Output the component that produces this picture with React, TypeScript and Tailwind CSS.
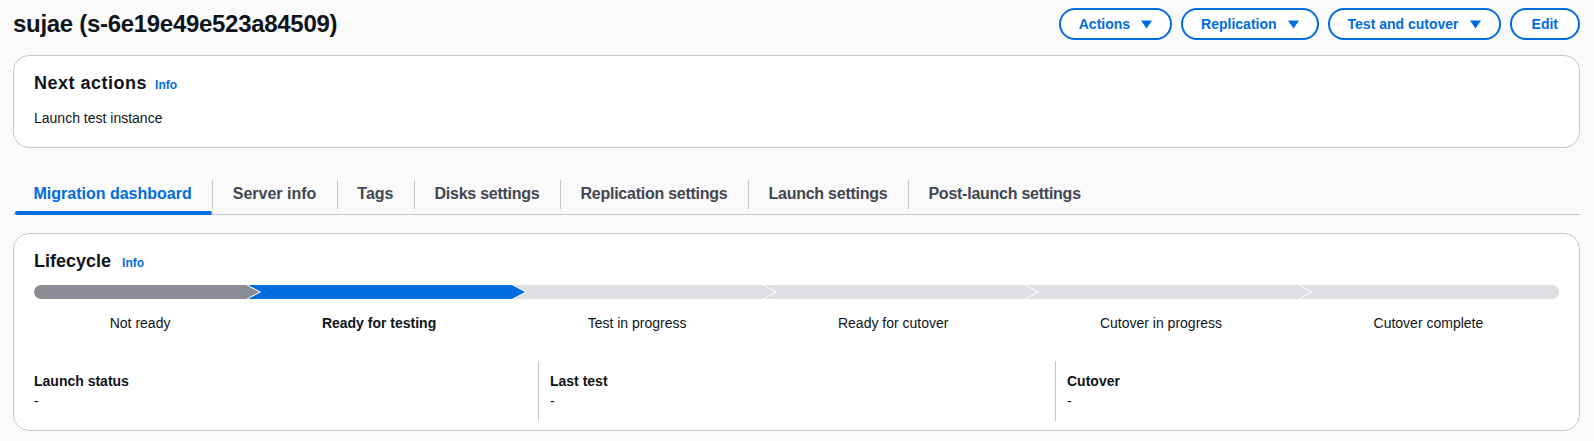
import type { ReactNode } from "react"

type Step = {
  label: string
  state: "done" | "current" | "todo"
}

const steps: Step[] = [
  { label: "Not ready", state: "done" },
  { label: "Ready for testing", state: "current" },
  { label: "Test in progress", state: "todo" },
  { label: "Ready for cutover", state: "todo" },
  { label: "Cutover in progress", state: "todo" },
  { label: "Cutover complete", state: "todo" },
]

const tabs = [
  "Migration dashboard",
  "Server info",
  "Tags",
  "Disks settings",
  "Replication settings",
  "Launch settings",
  "Post-launch settings",
]

const Caret = () => (
  <svg width="11" height="9" viewBox="0 0 11 9" className="ml-[11px]">
    <polygon points="0,0.5 11,0.5 5.5,8.5" fill="currentColor" />
  </svg>
)

const HeaderButton = ({
  children,
  caret,
  className,
}: {
  children: ReactNode
  caret?: boolean
  className?: string
}) => (
  <button
    className={`flex h-8 items-center rounded-full border-2 border-[#006ce0] bg-white text-[14px] font-bold leading-5 text-[#006ce0] ${
      className ?? "px-[18px]"
    }`}
  >
    {children}
    {caret && <Caret />}
  </button>
)

const InfoLink = ({ className }: { className?: string }) => (
  <span className={`text-[12px] font-bold text-[#006ce0] ${className ?? ""}`}>Info</span>
)

const stepColor = {
  done: "bg-[#8c8c94]",
  current: "bg-[#006ce0]",
  todo: "bg-[#dedee3]",
}

const Lifecycle = () => (
  <div className="flex">
    {steps.map((step, i) => {
      const first = i === 0
      const last = i === steps.length - 1
      // each piece points into the next one; the 2px offset leaves a white chevron line
      const shape = first
        ? "w-[calc(100%_+_13px)] rounded-l-full [clip-path:polygon(0_0,calc(100%_-_13px)_0,100%_50%,calc(100%_-_13px)_100%,0_100%)]"
        : last
          ? "w-full rounded-r-full [clip-path:polygon(2px_0,100%_0,100%_100%,2px_100%,15px_50%)]"
          : "w-[calc(100%_+_13px)] [clip-path:polygon(2px_0,calc(100%_-_13px)_0,100%_50%,calc(100%_-_13px)_100%,2px_100%,15px_50%)]"
      return (
        <div key={step.label} className="relative flex flex-auto flex-col">
          <div className={`relative z-10 h-[14px] ${stepColor[step.state]} ${shape}`} />
          <div
            className={`mt-[14px] whitespace-nowrap text-center text-[14px] leading-5 text-[#0f141a] ${
              step.state === "current" ? "font-bold" : ""
            }`}
          >
            {step.label}
          </div>
        </div>
      )
    })}
  </div>
)

const StatusColumn = ({ title, border }: { title: string; border?: boolean }) => (
  <div className={`py-[10px] ${border ? "border-l border-[#c6c6cd] pl-[11px]" : ""}`}>
    <div className="text-[14px] font-bold leading-5 text-[#0f141a]">{title}</div>
    <div className="text-[14px] leading-5 text-[#0f141a]">-</div>
  </div>
)

export default function App() {
  return (
    <div className="min-h-screen bg-[#fafafa] pl-[13px] pr-[14px] pt-2 font-['Liberation_Sans',Arial,sans-serif] text-[#0f141a]">
      {/* Page header */}
      <div className="flex h-8 items-center justify-between">
        <h1 className="text-[24px] font-bold leading-[30px] tracking-[-0.3px]">
          sujae (s-6e19e49e523a84509)
        </h1>
        <div className="flex gap-[9px]">
          <HeaderButton caret>Actions</HeaderButton>
          <HeaderButton caret>Replication</HeaderButton>
          <HeaderButton caret>Test and cutover</HeaderButton>
          <HeaderButton className="px-5">Edit</HeaderButton>
        </div>
      </div>

      {/* Next actions */}
      <div className="mt-[15px] rounded-2xl border border-[#c6c6cd] bg-white px-5 pb-[19px] pt-4">
        <div className="flex items-baseline">
          <h2 className="text-[18px] font-bold leading-[22px] tracking-[0.5px]">Next actions</h2>
          <InfoLink className="ml-2" />
        </div>
        <p className="mt-[14px] text-[14px] leading-5">Launch test instance</p>
      </div>

      {/* Tabs */}
      <div className="mt-[26px] flex border-b border-[#c6c6cd]">
        {tabs.map((tab, i) => (
          <div key={tab} className="relative h-10 px-[20.5px] pt-2">
            {i > 0 && <span className="absolute left-0 top-[6px] h-[29px] w-px bg-[#c6c6cd]" />}
            <span
              className={`text-[16px] font-bold leading-5 ${
                i === 0 ? "text-[#006ce0]" : "text-[#424650]"
              } ${tab.endsWith("settings") ? "tracking-[-0.25px]" : ""}`}
            >
              {tab}
            </span>
            {i === 0 && (
              <span className="absolute bottom-[-1px] left-0.5 right-0 h-1 rounded-full bg-[#006ce0]" />
            )}
          </div>
        ))}
      </div>

      {/* Lifecycle */}
      <div className="mt-[18px] rounded-2xl border border-[#c6c6cd] bg-white px-5 pb-[9px] pt-4">
        <div className="flex items-baseline">
          <h2 className="text-[18px] font-bold leading-[22px]">Lifecycle</h2>
          <InfoLink className="ml-[11px]" />
        </div>
        <div className="mt-[13px]">
          <Lifecycle />
        </div>
        <div className="mt-[28px] grid grid-cols-[504px_517px_1fr]">
          <StatusColumn title="Launch status" />
          <StatusColumn title="Last test" border />
          <StatusColumn title="Cutover" border />
        </div>
      </div>
    </div>
  )
}
